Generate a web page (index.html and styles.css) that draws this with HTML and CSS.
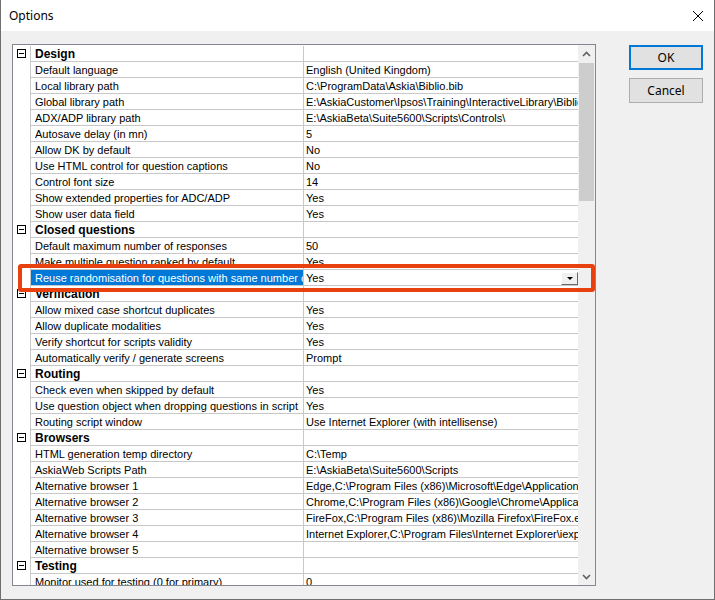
FILE: index.html
```html
<!DOCTYPE html>
<html lang="en">
<head>
    <meta charset="UTF-8">
    <title>Options</title>
    <link rel="stylesheet" href="styles.css">
</head>
<body>
    <div class="window">
        <div class="titlebar">
            <span class="title">Options</span>
            <svg class="close" width="12" height="12" viewBox="0 0 12 12">
                <path d="M1 1 L11 11 M11 1 L1 11" stroke="#000" stroke-width="1" fill="none"/>
            </svg>
        </div>

        <div class="client">
            <div class="grid">
                <div class="rows">
                    <div class="row cat"><div class="gutter"><span class="minus"></span></div><div class="name">Design</div><div class="value"></div></div>
                    <div class="row"><div class="gutter"></div><div class="name">Default language</div><div class="value">English (United Kingdom)</div></div>
                    <div class="row"><div class="gutter"></div><div class="name">Local library path</div><div class="value">C:\ProgramData\Askia\Biblio.bib</div></div>
                    <div class="row"><div class="gutter"></div><div class="name">Global library path</div><div class="value">E:\AskiaCustomer\Ipsos\Training\InteractiveLibrary\Biblio.bib</div></div>
                    <div class="row"><div class="gutter"></div><div class="name">ADX/ADP library path</div><div class="value">E:\AskiaBeta\Suite5600\Scripts\Controls\</div></div>
                    <div class="row"><div class="gutter"></div><div class="name">Autosave delay (in mn)</div><div class="value">5</div></div>
                    <div class="row"><div class="gutter"></div><div class="name">Allow DK by default</div><div class="value">No</div></div>
                    <div class="row"><div class="gutter"></div><div class="name">Use HTML control for question captions</div><div class="value">No</div></div>
                    <div class="row"><div class="gutter"></div><div class="name">Control font size</div><div class="value">14</div></div>
                    <div class="row"><div class="gutter"></div><div class="name">Show extended properties for ADC/ADP</div><div class="value">Yes</div></div>
                    <div class="row"><div class="gutter"></div><div class="name">Show user data field</div><div class="value">Yes</div></div>

                    <div class="row cat"><div class="gutter"><span class="minus"></span></div><div class="name">Closed questions</div><div class="value"></div></div>
                    <div class="row"><div class="gutter"></div><div class="name">Default maximum number of responses</div><div class="value">50</div></div>
                    <div class="row"><div class="gutter"></div><div class="name">Make multiple question ranked by default</div><div class="value">Yes</div></div>
                    <div class="row selected"><div class="gutter"></div><div class="name">Reuse randomisation for questions with same number of responses</div><div class="value editor"><span>Yes</span><span class="drop"></span></div></div>

                    <div class="row cat"><div class="gutter"><span class="minus"></span></div><div class="name">Verification</div><div class="value"></div></div>
                    <div class="row"><div class="gutter"></div><div class="name">Allow mixed case shortcut duplicates</div><div class="value">Yes</div></div>
                    <div class="row"><div class="gutter"></div><div class="name">Allow duplicate modalities</div><div class="value">Yes</div></div>
                    <div class="row"><div class="gutter"></div><div class="name">Verify shortcut for scripts validity</div><div class="value">Yes</div></div>
                    <div class="row"><div class="gutter"></div><div class="name">Automatically verify / generate screens</div><div class="value">Prompt</div></div>

                    <div class="row cat"><div class="gutter"><span class="minus"></span></div><div class="name">Routing</div><div class="value"></div></div>
                    <div class="row"><div class="gutter"></div><div class="name">Check even when skipped by default</div><div class="value">Yes</div></div>
                    <div class="row"><div class="gutter"></div><div class="name">Use question object when dropping questions in script</div><div class="value">Yes</div></div>
                    <div class="row"><div class="gutter"></div><div class="name">Routing script window</div><div class="value">Use Internet Explorer (with intellisense)</div></div>

                    <div class="row cat"><div class="gutter"><span class="minus"></span></div><div class="name">Browsers</div><div class="value"></div></div>
                    <div class="row"><div class="gutter"></div><div class="name">HTML generation temp directory</div><div class="value">C:\Temp</div></div>
                    <div class="row"><div class="gutter"></div><div class="name">AskiaWeb Scripts Path</div><div class="value">E:\AskiaBeta\Suite5600\Scripts</div></div>
                    <div class="row"><div class="gutter"></div><div class="name">Alternative browser 1</div><div class="value">Edge,C:\Program Files (x86)\Microsoft\Edge\Application\msedge.exe</div></div>
                    <div class="row"><div class="gutter"></div><div class="name">Alternative browser 2</div><div class="value">Chrome,C:\Program Files (x86)\Google\Chrome\Application\chrome.exe</div></div>
                    <div class="row"><div class="gutter"></div><div class="name">Alternative browser 3</div><div class="value">FireFox,C:\Program Files (x86)\Mozilla Firefox\FireFox.exe</div></div>
                    <div class="row"><div class="gutter"></div><div class="name">Alternative browser 4</div><div class="value">Internet Explorer,C:\Program Files\Internet Explorer\iexplore.exe</div></div>
                    <div class="row"><div class="gutter"></div><div class="name">Alternative browser 5</div><div class="value"></div></div>

                    <div class="row cat"><div class="gutter"><span class="minus"></span></div><div class="name">Testing</div><div class="value"></div></div>
                    <div class="row"><div class="gutter"></div><div class="name">Monitor used for testing (0 for primary)</div><div class="value">0</div></div>
                </div>

                <div class="scrollbar">
                    <div class="sb-btn">
                        <svg width="9" height="6" viewBox="0 0 9 6"><path d="M1 5 L4.5 1.5 L8 5" stroke="#606060" stroke-width="1.6" fill="none"/></svg>
                    </div>
                    <div class="sb-track"><div class="sb-thumb"></div></div>
                    <div class="sb-btn">
                        <svg width="9" height="6" viewBox="0 0 9 6"><path d="M1 1 L4.5 4.5 L8 1" stroke="#606060" stroke-width="1.6" fill="none"/></svg>
                    </div>
                </div>
            </div>

            <div class="buttons">
                <button class="btn default">OK</button>
                <button class="btn">Cancel</button>
            </div>
        </div>

        <div class="highlight"></div>
    </div>
</body>
</html>
```

FILE: styles.css
```css
body {
    margin: 0;
    padding: 0;
    background: #f0f0f0;
}
.window {
    position: relative;
    width: 715px;
    height: 600px;
    box-sizing: border-box;
    border: 1px solid #6f6f6f;
    border-top: none;
    background: #f0f0f0;
    overflow: hidden;
}
.titlebar {
    height: 31px;
    background: white;
    display: flex;
    align-items: center;
    justify-content: space-between;
    padding: 0 8px 0 8px;
}
.title {
    font-family: "Noto Sans", sans-serif;
    font-size: 12px;
    color: #000;
}
.close {
    display: block;
    margin-right: 2px;
}
.client {
    display: flex;
    padding: 13px 0 0 11px;
}
.grid {
    width: 584px;
    height: 542px;
    box-sizing: border-box;
    border: 1px solid #828790;
    background: white;
    display: flex;
    overflow: hidden;
}
.rows {
    width: 565px;
    padding-top: 1px;
    font-family: "Liberation Sans", Arial, sans-serif;
    font-size: 11px;
    color: #000;
}
.row {
    display: flex;
    height: 16px;
}
.gutter {
    width: 17px;
    display: flex;
    justify-content: center;
    align-items: center;
    padding-bottom: 1px;
    box-sizing: border-box;
}
.minus {
    position: relative;
    width: 9px;
    height: 9px;
    box-sizing: border-box;
    border: 1px solid #000;
}
.minus::after {
    content: "";
    position: absolute;
    left: 1px;
    top: 3px;
    width: 5px;
    height: 1px;
    background: #000;
}
.name, .value {
    border-left: 1px solid #c8c8c8;
    border-bottom: 1px solid #c8c8c8;
    padding-top: 1px;
    line-height: 14px;
    white-space: nowrap;
    overflow: hidden;
}
.name {
    padding-left: 4px;
    width: 268px;
}
.value {
    width: 272px;
    padding-left: 2px;
}
.cat .name {
    font-weight: bold;
    font-size: 12px;
}
.selected .name {
    background: #0078d7;
    color: white;
}
.editor {
    display: flex;
    align-items: center;
    justify-content: space-between;
}
.drop {
    position: relative;
    width: 17px;
    height: 13px;
    box-sizing: border-box;
    background: #f0f0f0;
    border-top: 1px solid #fff;
    border-left: 1px solid #fff;
    border-right: 1px solid #696969;
    border-bottom: 1px solid #696969;
}
.drop::after {
    content: "";
    position: absolute;
    left: 5px;
    top: 4px;
    border-left: 3px solid transparent;
    border-right: 3px solid transparent;
    border-top: 3px solid #000;
}
.scrollbar {
    width: 17px;
    background: #f0f0f0;
    display: flex;
    flex-direction: column;
}
.sb-btn {
    height: 17px;
    display: flex;
    align-items: center;
    justify-content: center;
}
.sb-track {
    flex: 1;
}
.sb-thumb {
    margin: 1px 1px 0 1px;
    height: 138px;
    background: #cdcdcd;
}
.buttons {
    display: flex;
    flex-direction: column;
    gap: 8px;
    margin: 1px 0 0 33px;
}
.btn {
    width: 74px;
    height: 25px;
    box-sizing: border-box;
    background: #e1e1e1;
    border: 1px solid #adadad;
    font-family: "Noto Sans", sans-serif;
    font-size: 12px;
    color: #000;
    padding: 0;
}
.btn.default {
    border: 2px solid #0078d7;
}
.highlight {
    position: absolute;
    left: 17px;
    top: 264px;
    width: 577px;
    height: 28px;
    box-sizing: border-box;
    border: 4px solid #e8410d;
    border-radius: 3px;
}
```
